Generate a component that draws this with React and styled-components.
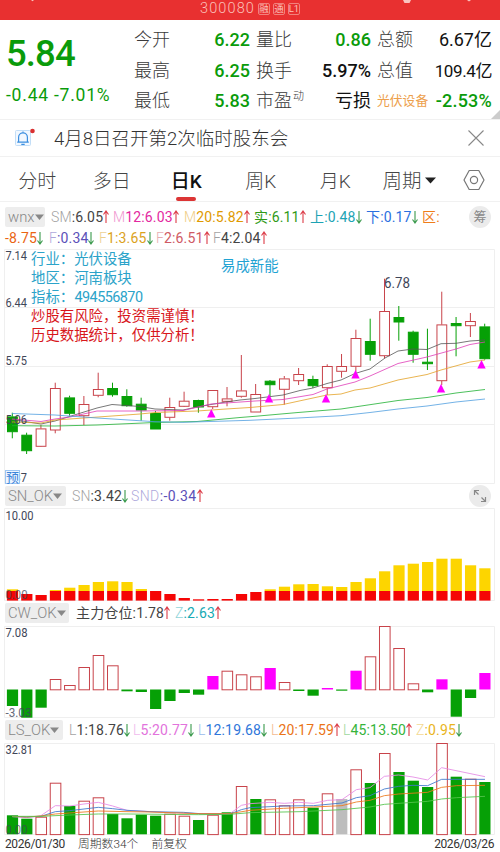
import React from 'react';
import styled, { createGlobalStyle } from 'styled-components';

const GlobalStyle = createGlobalStyle`
  * {
    box-sizing: border-box;
  }

  body {
    margin: 0;
    background: #fff;
    font-family: Roboto, "Noto Sans CJK SC", sans-serif;
    overflow: hidden;
  }
`;

const Page = styled.div`
  width: 500px;
  height: 852px;
  overflow: hidden;
  background: #fff;
`;

const TopBar = styled.div`
  position: relative;
  display: flex;
  justify-content: center;
  align-items: flex-start;
  gap: 3px;
  height: 20px;
  padding-top: 2px;
  background: #e83030;
  color: #fbc0ba;
`;

const StockCode = styled.span`
  font-size: 14.5px;
  font-weight: 300;
  line-height: 13px;
  letter-spacing: 1.1px;
`;

const Tag = styled.span`
  width: 12px;
  height: 12px;
  margin-top: 1px;
  border: 1px solid #f2817c;
  border-radius: 2px;
  font-size: 9.5px;
  line-height: 10px;
  text-align: center;
  display: flex;
  justify-content: center;
`;

const TopMarks = styled.svg`
  position: absolute;
  left: 0;
  top: 0;
`;

const Quote = styled.div`
  position: relative;
  display: flex;
  height: 100px;
  border-bottom: 1px solid #f1f1f1;
`;

const PriceBox = styled.div`
  width: 134px;
  padding-left: 6px;
  color: #0a9b0a;
`;

const Price = styled.div`
  margin-top: 11px;
  height: 46px;
  line-height: 46px;
  font-size: 36.5px;
  font-weight: 500;
  letter-spacing: -0.9px;
`;

const Change = styled.div`
  margin-top: 5px;
  line-height: 27px;
  font-size: 17.5px;
  letter-spacing: 0.78px;
  white-space: nowrap;
`;

const QuoteColumn = styled.div`
  width: ${props => props.$width}px;
  margin-right: ${props => props.$gap}px;
  padding-top: 5px;
`;

const QuoteRow = styled.div`
  display: flex;
  justify-content: space-between;
  align-items: center;
  height: 30.6px;
  line-height: 30px;
  white-space: nowrap;
`;

const QuoteLabel = styled.span`
  font-size: 18px;
  font-weight: 300;
  color: #3a3a3a;

  sup {
    font-size: 11px;
    line-height: 10px;
    vertical-align: 7px;
    margin-left: 1px;
  }
`;

const Sector = styled.span`
  font-size: 12.8px;
  color: #eda04c;
`;

const QuoteValue = styled.span`
  font-size: ${props => props.$size || 18}px;
  font-weight: ${props => props.$cjk ? 400 : 500};
  letter-spacing: ${props => props.$spacing || 0}px;
  color: ${props => props.$color || '#111'};
`;

const Corner = styled.div`
  position: absolute;
  right: 0;
  bottom: 0;
  border-left: 9px solid transparent;
  border-bottom: 9px solid #ccc;
`;

const News = styled.div`
  display: flex;
  align-items: center;
  height: 37px;
  padding: 0 15px 0 14px;
  border-bottom: 1px solid #f1f1f1;
`;

const NewsText = styled.span`
  flex: 1;
  margin-left: 18px;
  padding-top: 1px;
  font-size: 18.5px;
  font-weight: 300;
  line-height: 30px;
  color: #333;
`;

const Tabs = styled.div`
  display: flex;
  height: 45px;
  padding-top: 10px;
  border-bottom: 1px solid #f1f1f1;
`;

const Tab = styled.div`
  display: flex;
  flex-direction: column;
  align-items: center;
  width: 74.5px;
  height: 34px;
  font-size: 19px;
  font-weight: ${props => props.$active ? 500 : 300};
  line-height: 30px;
  color: ${props => props.$active ? '#111' : '#444'};

  &::after {
    content: '';
    width: 20px;
    height: 4px;
    border-radius: 2px;
    background: ${props => props.$active ? '#dc3535' : 'transparent'};
  }
`;

const PeriodTab = styled.div`
  display: flex;
  width: 90px;
  padding-left: 10px;
  font-size: 19.5px;
  font-weight: 300;
  line-height: 30px;
  color: #444;

  svg {
    margin: 10px 0 0 3px;
  }
`;

const TabIcon = styled.div`
  padding: 2px 0 0 0;
`;

const Legend = styled.div`
  display: flex;
  align-items: center;
  height: ${props => props.$height}px;
  padding: 0 9px ${props => props.$lift || 0}px 5px;
`;

const Picker = styled.div`
  display: flex;
  align-items: center;
  flex: none;
  gap: 0;
  width: ${props => props.$width}px;
  height: 20px;
  margin-right: ${props => props.$gap || 6}px;
  padding-left: 3px;
  background: #ededed;
  border-radius: 2px;
  font-size: 14.8px;
  font-weight: 300;
  color: #888;
`;

const Item = styled.div`
  display: flex;
  align-items: center;
  flex: none;
  width: ${props => props.$width}px;
  font-size: 14px;
  line-height: 20px;
  letter-spacing: ${props => props.$spacing ?? 0.15}px;
  white-space: nowrap;
  color: ${props => props.$color};
`;

const Faint = styled.span`
  font-weight: 300;
  opacity: 0.5;
`;

const RoundButton = styled.div`
  display: flex;
  justify-content: center;
  align-items: center;
  flex: none;
  width: 22px;
  height: 22px;
  margin-left: auto;
  border-radius: 50%;
  background: #ebebeb;
  font-size: 13px;
  line-height: 22px;
  color: #888;
`;

const Chart = styled.svg`
  display: block;
  overflow: visible;
`;

const Footer = styled.div`
  display: flex;
  height: 17px;
  padding: 0 6px 0 5px;
  font-size: 12px;
  line-height: 18px;
  color: #333;
  white-space: nowrap;
`;

const FooterDate = styled.span`
  width: 73px;
  letter-spacing: -0.4px;
`;

const FooterNote = styled.span`
  width: ${props => props.$width}px;
  font-size: 11.8px;
  font-weight: 300;
`;

const FooterEnd = styled.span`
  margin-left: auto;
  letter-spacing: -0.4px;
`;

const RED = '#c8434a';
const GREEN = '#06a006';
const MAGENTA = '#f0f';

const columnX = i => 12.3 + i * 14.315;

// [up, high, bodyTop, bodyBottom, low]
const candles = [
  [0, 412.7, 416.7, 431.7, 438.3], [0, 432.7, 435, 450.7, 454], [1, 425, 428.7, 446.3, 447],
  [1, 382.7, 388.3, 430, 433.3], [0, 395.7, 397.7, 413.3, 415.7], [1, 396, 404.3, 415.7, 425],
  [1, 372.7, 389.3, 395.3, 397.3], [0, 382.7, 388.3, 394.7, 396.7], [0, 389.3, 396.3, 405.7, 406.7],
  [0, 397.7, 404, 410, 420.7], [0, 411, 413.3, 429, 429], [1, 397.7, 407.3, 417.3, 420.7],
  [1, 391.7, 401, 406.3, 407], [0, 399.7, 400.3, 407, 412.7], [1, 390.3, 390.3, 406.7, 409],
  [1, 387, 398.7, 401.3, 406.3], [1, 355, 390.7, 396.3, 397.7], [1, 384, 394.3, 412, 412],
  [0, 380, 381, 384.7, 396.7], [1, 376, 378.7, 389.3, 404.7], [1, 368, 374.3, 380.7, 385],
  [0, 375.7, 379.3, 385.7, 388], [1, 364.3, 366.3, 387.7, 395], [1, 354, 366.3, 371.3, 377.7],
  [1, 329.7, 338.3, 366.3, 371.7], [0, 318.7, 341.3, 354.3, 360.7], [1, 278.7, 311.3, 355.7, 358.3],
  [0, 306, 317.3, 322, 340.7], [0, 330.7, 332, 354.3, 362.7], [0, 328.7, 362, 363.7, 370],
  [1, 291.7, 324.7, 380.7, 385], [0, 317, 323.3, 325.7, 356.3], [1, 313, 321.3, 325.7, 337],
  [0, 323.7, 326.7, 358.7, 359.7],
];

const averages = [
  ['#555', '12,419.5 41,424 55,421 84,412 97,408 112,404.5 140,406.5 155,409 183,410 197,407 211,404.5 226,402 240,400 255,398.5 283,395 300,390.5 313,388 327,383.5 341,380 355,373.5 370,369 385,358 398,351 413,349 427,349.5 441,343.7 456,343.3 470,341 485,340'],
  ['#e03cb8', '12,419 41,421.5 55,419 70,417 97,411 140,411 183,410.5 211,404 226,403 255,401 283,399.5 313,394.5 327,389 355,382 370,376 398,363.5 427,357 456,349 470,344.5 485,342'],
  ['#e3a124', '12,422 41,423 55,420 84,418 140,414 155,412.5 197,411 226,409 250,407.5 283,404.5 313,398 327,395 341,394 355,390 370,388 398,380 427,374.5 441,370 470,362 485,360'],
  ['#1eb032', '12,425.7 55,426 97,425 155,422.5 197,421.5 240,417.5 255,416.3 298,412.5 341,409 398,400.5 427,397.5 456,393 485,389.5'],
  ['#4f9ee0', '12,413.5 55,415 97,418 155,421.7 183,422.3 250,420.3 298,418 341,415.7 370,412.5 398,409 427,406 456,402 485,399'],
];

const signals = [[211.3, 413.5], [269, 398.5], [326, 398.5], [355.5, 374.5], [441, 388.5], [481.5, 364.5]];

const snTops = [589.3, 594, 595, 590, 587.7, 585, 582, 581.3, 582, 589, 591, 594, 598, 599.3, 599, 599, 594, 592,
  589.3, 586.7, 584.3, 584, 586.3, 587, 582, 578.3, 571.3, 565.3, 563.7, 562, 558.7, 558.7, 565.3, 568.3];

// g = falling, r = rising, m = signal, n = neutral
const cwBars = ['g706', 'g717.7', 'g707.7', 'r679', 'r685', 'r667', 'r655', 'r665.3', 'g691.3', 'g692', 'g709', 'g701',
  'g693', 'g694.7', 'm676', 'r670.7', 'r674.3', 'r676.3', 'm668', 'r682', 'g691', 'g695.7', 'm688', 'g690.7', 'm670.7',
  'r656.3', 'r626', 'r648', 'r683.3', 'g692.3', 'm679.3', 'g716.7', 'g698', 'm673'];

const lsBars = ['g815.3', 'g818.7', 'r816.7', 'r782.7', 'g806', 'r800.7', 'r797.3', 'g814', 'g818.3', 'g814.7', 'g815.7',
  'r813.7', 'r815.7', 'g820', 'r814.7', 'g812.3', 'r786', 'g799', 'r799.3', 'r805.3', 'r799.3', 'g807.7', 'r793.3',
  'n799', 'r769.3', 'g783', 'r753', 'g772', 'g780.7', 'g787', 'r743', 'g776.7', 'r778.7', 'g782'];

// drawn in a 3x grid, scaled down in the chart
const lsLines = [
  ['#e58be5', '37,305 80,308 123,302 166,272 209,273 252,267 295,262 338,273 381,286 495,292 595,296 690,296 724,271 750,266 810,262 853,265 896,262 940,265 983,256 1026,254 1069,224 1110,218 1153,184 1196,180 1239,186 1283,195 1325,158 1455,185'],
  ['#4079cc', '37,304 80,306 123,304 166,290 209,287 295,277 338,281 381,286 450,290 550,292 600,296 690,297 724,284 750,278 850,273 940,272 1026,264 1069,248 1110,242 1153,222 1196,214 1239,211 1283,212 1325,193 1455,193'],
  ['#ec7a1c', '37,304 80,306 123,303 166,297 209,294 295,288 381,290 450,291 595,296 690,296 750,286 850,280 940,276 1026,272 1069,261 1110,256 1153,242 1196,237 1283,232 1325,217 1370,212 1455,211'],
  ['#55c44c', '37,304 123,304 209,300 295,297 381,297 595,299 690,298 750,293 900,290 1026,284 1110,276 1153,268 1283,259 1325,252 1370,248 1455,244'],
];

const fills = { g: GREEN, m: MAGENTA, n: '#bdbdbd' };

function Arrow({ down }) {
  return (
    <svg width="6" height="14" viewBox="0 0 6 14" fill="none" stroke={down ? '#3a9a4c' : '#dc3c48'} strokeWidth="1.1">
      <path d={down ? 'M3 1V13M.5 9.5L3 13L5.5 9.5' : 'M3 13V1M.5 4.5L3 1L5.5 4.5'} />
    </svg>
  );
}

function Indicator({ width, color, faint, text, dir, spacing }) {
  return (
    <Item $width={width} $color={color} $spacing={spacing}>
      {faint && <Faint>{faint}</Faint>}
      <span>{text}</span>
      {dir && <Arrow down={dir === 'down'} />}
    </Item>
  );
}

function Name({ children, width, gap }) {
  return (
    <Picker $width={width} $gap={gap}>
      {children}
      <svg width="9" height="6" viewBox="0 0 9 6" fill="#888"><path d="M0 .5H9L4.5 6Z" /></svg>
    </Picker>
  );
}

function AxisText({ x = 5.5, y, width, size = 12.5, color = '#3f4658', children }) {
  return (
    <text x={x} y={y} fontSize={size} fill={color} textLength={width} lengthAdjust="spacingAndGlyphs">{children}</text>
  );
}

function Frame({ top, bottom, lines = [] }) {
  return (
    <g fill="none" stroke="#efefef">
      <path d={`M4.5 ${top}.5H494.5V${bottom}.5H4.5Z`} />
      {lines.map(y => <path key={y} d={`M4.5 ${y}.5H494.5`} />)}
    </g>
  );
}

function Bars({ bars, base }) {
  return bars.map((bar, i) => {
    const kind = bar[0];
    const value = Number(bar.slice(1));
    const top = Math.min(value, base);
    const height = Math.abs(base - value);
    if (kind === 'r') {
      return <rect key={i} x={columnX(i) - 5} y={top + 0.5} width="10.6" height={height - 0.2} fill="#fff" stroke={RED} />;
    }
    return <rect key={i} x={columnX(i) - 5.4} y={top} width="11.2" height={height} fill={fills[kind]} />;
  });
}

function PriceChart() {
  return (
    <Chart width="500" height="235" viewBox="0 249 500 235">
      <Frame top={249} bottom={483} lines={[307, 366, 424]} />
      {candles.map(([up, high, top, bottom, low], i) => {
        const x = columnX(i);
        return (
          <g key={i} stroke={up ? RED : GREEN}>
            <path d={`M${x} ${high}V${top}M${x} ${bottom}V${low}`} />
            <rect x={x - 4.8} y={top + 0.2} width="9.8" height={Math.max(bottom - top - 0.2, 1)} fill={up ? '#fff' : GREEN} />
          </g>
        );
      })}
      {averages.map(([color, points]) => (
        <polyline key={color} points={points} fill="none" stroke={color} strokeWidth="0.8" />
      ))}
      {signals.map(([x, y]) => (
        <path key={x} d={`M${x} ${y - 4.5}L${x + 4.2} ${y + 4}H${x - 4.2}Z`} fill={MAGENTA} />
      ))}
      <AxisText y={259.8} width={21.5}>7.14</AxisText>
      <AxisText y={306.5} width={21.5}>6.44</AxisText>
      <AxisText y={365} width={21.5}>5.75</AxisText>
      <AxisText y={423.6} width={21.5}>5.06</AxisText>
      <AxisText y={482} width={21.5}>4.37</AxisText>
      <AxisText x={384} y={288.3} width={26} size={14}>6.78</AxisText>
      <rect x="5.5" y="470.5" width="14" height="13" fill="#eef6ff" stroke="#9cc6f3" />
      <AxisText x={6} y={482} width={13} size={13} color="#3b83d8">预</AxisText>
      <g fontSize="14.4" fill="#2ba3c9">
        <text x="31" y="263.5">行业：光伏设备</text>
        <text x="31" y="282.8">地区：河南板块</text>
        <text x="31" y="302">指标：</text>
        <text x="74.5" y="301.8" textLength="68.5">494556870</text>
        <text x="221" y="271" fill="#1fa3d3">易成新能</text>
      </g>
      <g fontSize="14.4" fill="#d8171c">
        <text x="31" y="321">炒股有风险，投资需谨慎！</text>
        <text x="31" y="340.2">历史数据统计，仅供分析！</text>
      </g>
    </Chart>
  );
}

function SnChart() {
  return (
    <Chart width="500" height="93" viewBox="0 508 500 93">
      <Frame top={508} bottom={600} />
      {snTops.map((top, i) => {
        const x = columnX(i) - 5.4;
        const redTop = Math.max(top, 591);
        return (
          <g key={i}>
            {top < 591 && <rect x={x} y={top} width="11.2" height={591 - top} fill="#fdd500" />}
            <rect x={x} y={redTop} width="11.2" height={600.6 - redTop} fill="#f50505" />
          </g>
        );
      })}
      <AxisText y={519.5} width={28}>10.00</AxisText>
      <g opacity="0.75"><AxisText y={598.8} width={22}>0.00</AxisText></g>
    </Chart>
  );
}

function CwChart() {
  return (
    <Chart width="500" height="92" viewBox="0 626 500 92">
      <Frame top={626} bottom={717} />
      <Bars bars={cwBars} base={689.5} />
      <AxisText y={636.6} width={22}>7.08</AxisText>
      <g opacity="0.8"><AxisText y={716.8} width={26}>-3.03</AxisText></g>
    </Chart>
  );
}

function LsChart() {
  return (
    <Chart width="500" height="92" viewBox="0 743 500 92">
      <Frame top={743} bottom={834} />
      <Bars bars={lsBars} base={834.3} />
      <g transform="translate(0 715) scale(0.33333)" fill="none" strokeWidth="2.6">
        {lsLines.map(([color, points]) => <polyline key={color} points={points} stroke={color} />)}
      </g>
      <AxisText y={753.8} width={27.5}>32.81</AxisText>
      <g opacity="0.7"><AxisText y={833.6} width={22}>0.00</AxisText></g>
    </Chart>
  );
}

function QuotePanel() {
  return (
    <Quote>
      <PriceBox>
        <Price>5.84</Price>
        <Change>-0.44 -7.01%</Change>
      </PriceBox>
      <QuoteColumn $width={116} $gap={6}>
        <QuoteRow><QuoteLabel>今开</QuoteLabel><QuoteValue $color="#0a9b0a">6.22</QuoteValue></QuoteRow>
        <QuoteRow><QuoteLabel>最高</QuoteLabel><QuoteValue $color="#0a9b0a">6.25</QuoteValue></QuoteRow>
        <QuoteRow><QuoteLabel>最低</QuoteLabel><QuoteValue $color="#0a9b0a">5.83</QuoteValue></QuoteRow>
      </QuoteColumn>
      <QuoteColumn $width={115} $gap={6}>
        <QuoteRow><QuoteLabel>量比</QuoteLabel><QuoteValue $color="#0a9b0a">0.86</QuoteValue></QuoteRow>
        <QuoteRow><QuoteLabel>换手</QuoteLabel><QuoteValue>5.97%</QuoteValue></QuoteRow>
        <QuoteRow><QuoteLabel>市盈<sup>动</sup></QuoteLabel><QuoteValue $cjk>亏损</QuoteValue></QuoteRow>
      </QuoteColumn>
      <QuoteColumn $width={115} $gap={0}>
        <QuoteRow><QuoteLabel>总额</QuoteLabel><QuoteValue $cjk>6.67亿</QuoteValue></QuoteRow>
        <QuoteRow><QuoteLabel>总值</QuoteLabel><QuoteValue $cjk $size={17} $spacing={-0.4}>109.4亿</QuoteValue></QuoteRow>
        <QuoteRow><Sector>光伏设备</Sector><QuoteValue $color="#0a9b0a" $spacing={0.2}>-2.53%</QuoteValue></QuoteRow>
      </QuoteColumn>
      <Corner />
    </Quote>
  );
}

function App() {
  return (
    <Page>
      <GlobalStyle />
      <TopBar>
        <TopMarks width="500" height="5" viewBox="0 0 500 5" fill="#f9c4c0">
          <path d="M31 0H34L32.5 1.2ZM403 0H411L409.5 3H404.5ZM467 0H471L469 1.5Z" />
        </TopMarks>
        <StockCode>300080</StockCode>
        <Tag>融</Tag>
        <Tag>通</Tag>
        <Tag>L1</Tag>
      </TopBar>

      <QuotePanel />

      <News>
        <svg width="22" height="22" viewBox="0 0 22 22" fill="none" stroke="#3b8ee0">
          <rect x="1.5" y="3.5" width="15" height="15" rx="1" fill="#f2f8ff" stroke="#c3def7" />
          <path d="M3.2 15.2H14.8M4.6 15V10.2A4.4 4.4 0 0 1 13.4 10.2V15M9 5.8V4.5M7.3 17.3H10.7" strokeWidth="1.2" />
          <circle cx="18.5" cy="4" r="2.3" fill="#d93030" stroke="none" />
        </svg>
        <NewsText>4月8日召开第2次临时股东会</NewsText>
        <svg width="18" height="18" viewBox="0 0 18 18" stroke="#888" strokeWidth="1.1">
          <path d="M1.5 1.5L16.5 16.5M16.5 1.5L1.5 16.5" />
        </svg>
      </News>

      <Tabs>
        <Tab>分时</Tab>
        <Tab>多日</Tab>
        <Tab $active>日K</Tab>
        <Tab>周K</Tab>
        <Tab>月K</Tab>
        <PeriodTab>
          周期
          <svg width="11" height="7" viewBox="0 0 11 7" fill="#222"><path d="M0 .5H11L5.5 6.5Z" /></svg>
        </PeriodTab>
        <TabIcon>
          <svg width="22" height="22" viewBox="0 0 22 22" fill="none" stroke="#777" strokeWidth="1.2">
            <path d="M6.2 1.5H15.8L21 11L15.8 20.5H6.2L1 11Z" strokeLinejoin="round" />
            <circle cx="11" cy="11" r="3.6" />
          </svg>
        </TabIcon>
      </Tabs>

      <Legend $height={29}>
        <Name width={40}>wnx</Name>
        <Indicator width={62} color="#444" faint="SM" text=":6.05" dir="up" />
        <Indicator width={71} color="#e328a0" faint="M" text="12:6.03" dir="up" />
        <Indicator width={70} color="#e09a00" faint="M" text="20:5.82" dir="up" />
        <Indicator width={56} color="#2f9a18" text="实:6.11" dir="up" />
        <Indicator width={56} color="#1ca3b4" text="上:0.48" dir="down" />
        <Indicator width={56} color="#2b6fe0" text="下:0.17" dir="down" />
        <Indicator width={25} color="#ef7d1a" text="区:" />
        <RoundButton>筹</RoundButton>
      </Legend>
      <Legend $height={18} $lift={5}>
        <Indicator width={44} color="#ea6412" text="-8.75" dir="down" />
        <Indicator width={50} color="#5b50b8" faint="F" text=":0.34" dir="down" />
        <Indicator width={57} color="#dba21c" faint="F" text="1:3.65" dir="down" />
        <Indicator width={57} color="#cf5a64" faint="F" text="2:6.51" dir="up" />
        <Indicator width={57} color="#444" faint="F" text="4:2.04" dir="up" />
      </Legend>
      <PriceChart />

      <Legend $height={24}>
        <Name width={61}>SN_OK</Name>
        <Indicator width={59} color="#444" faint="SN" text=":3.42" dir="down" />
        <Indicator width={75} color="#5b50b8" faint="SND" text=":-0.34" dir="up" spacing={0.4} />
        <RoundButton>
          <svg width="14" height="14" viewBox="0 0 14 14" fill="none" stroke="#888" strokeWidth="1.2">
            <path d="M1.5 6V1.5H6M1.5 1.5L5.5 5.5M12.5 8V12.5H8M12.5 12.5L8.5 8.5" />
          </svg>
        </RoundButton>
      </Legend>
      <SnChart />

      <Legend $height={25} $lift={1}>
        <Name width={64} gap={7}>CW_OK</Name>
        <Indicator width={99} color="#444" text="主力仓位:1.78" dir="up" />
        <Indicator width={50} color="#17aab4" faint="Z" text=":2.63" dir="up" />
      </Legend>
      <CwChart />

      <Legend $height={25} $lift={1}>
        <Name width={58}>LS_OK</Name>
        <Indicator width={64} color="#444" faint="L" text="1:18.76" dir="down" />
        <Indicator width={65} color="#e273dc" faint="L" text="5:20.77" dir="down" />
        <Indicator width={73} color="#2f76da" faint="L" text="12:19.68" dir="down" />
        <Indicator width={72} color="#ea7417" faint="L" text="20:17.59" dir="up" />
        <Indicator width={73} color="#36b43a" faint="L" text="45:13.50" dir="up" />
        <Indicator width={46} color="#e9b41c" faint="Z" text=":0.95" dir="down" />
      </Legend>
      <LsChart />

      <Footer>
        <FooterDate>2026/01/30</FooterDate>
        <FooterNote $width={73.5}>周期数34个</FooterNote>
        <FooterNote $width={40}>前复权</FooterNote>
        <FooterEnd>2026/03/26</FooterEnd>
      </Footer>
    </Page>
  );
}

export default App;
